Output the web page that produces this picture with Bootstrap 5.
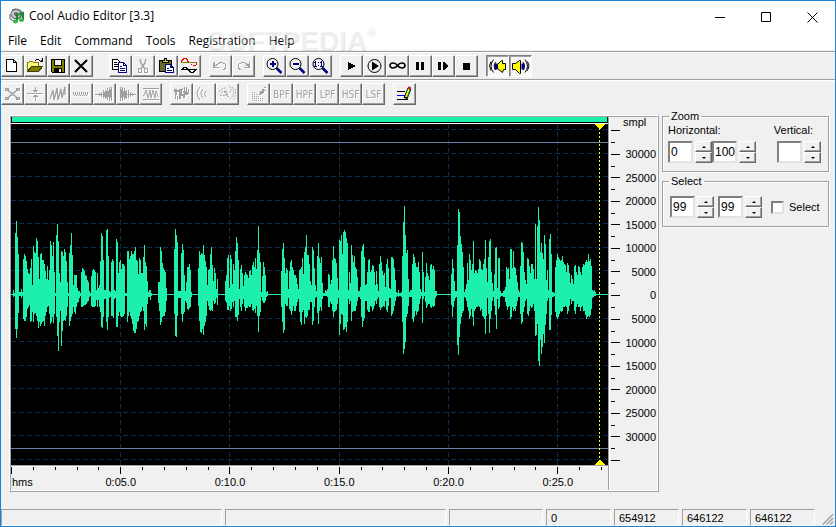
<!DOCTYPE html>
<html lang="en">
<head>
<meta charset="utf-8">
<meta name="viewport" content="width=device-width, initial-scale=1">
<title>Cool Audio Editor [3.3]</title>
<link href="https://cdn.jsdelivr.net/npm/bootstrap@5.3.0/dist/css/bootstrap.min.css" rel="stylesheet">
<style>
body{font-family:"Liberation Sans",Arial,sans-serif;font-size:11px;line-height:14px;color:#000;background:#f0f0f0}
.app{border:1px solid #1883d7;min-height:100vh}
.caption,.menus{font-family:"Open Sans","Noto Sans",sans-serif;font-size:12px;background:#fff}
.caption{height:30px;padding-left:8px}
.menus{height:19px}
.menus a{color:#000;text-decoration:none;line-height:19px}
.menus a:hover{background:#cce8ff}
.menulist{gap:13px;padding-left:7px}
.winbtn{width:46px;height:30px;border:0;border-radius:0}
.watermark{position:absolute;left:205px;top:23px;font:bold 28px/34px "Liberation Sans",Arial,sans-serif;color:rgba(255,255,255,.4);text-shadow:1px 1px 1px rgba(0,0,0,.1);pointer-events:none}
.watermark sup{font-size:12px;top:-14px}
.tools{height:28px;padding-top:3px;gap:8px;border-top:1px solid #a0a0a0;box-shadow:inset 0 1px 0 #fff}
.tools.first{margin-top:1px}
.wide{margin-right:8px}
.tool{width:23px;height:22px;padding:0;border-radius:0;border:1px solid;border-color:#fff #696969 #696969 #fff;box-shadow:inset -1px -1px 0 #a0a0a0;background:#f0f0f0;display:block;overflow:hidden;color:#000}
.tool.pressed{background:#f8f8f8;border-color:#808080 #fff #fff #808080;box-shadow:inset 1px 1px 0 #a0a0a0}
.tool:disabled{opacity:1;color:#a0a0a0;background:#f0f0f0;border-color:#fff #696969 #696969 #fff}
.tool:disabled svg,.tool:disabled span{filter:drop-shadow(1px 1px 0 #fff)}
.tool svg{display:block;width:21px;height:20px;shape-rendering:crispEdges;fill:none;stroke:currentColor}
.tool svg .soft{shape-rendering:auto}
.tool span{display:block;font:10px/19px "DejaVu Sans Condensed","DejaVu Sans",sans-serif;text-align:center;white-space:nowrap}
.workspace{padding:2px 6px 17px 8px;gap:3px}
.wavebox{margin-top:6px;border:1px solid;border-color:#fff #a0a0a0 #a0a0a0 #fff;min-width:0}
.waveinner{border:1px solid;border-color:#a0a0a0 #fff #fff #a0a0a0}
.overview{height:6px;margin-bottom:1px;background:#1df0ad;border:solid #000;border-width:0 1px 1px;box-shadow:0 1px 0 #fff}
.plot{background:#000;min-height:200px;position:relative}
.plot svg{position:absolute;inset:0;width:100%;height:100%;shape-rendering:crispEdges}
.ruler{height:25px;border-top:1px solid #a0a0a0;box-shadow:inset 0 1px 0 #fff}
.ruler svg{display:block;width:100%;height:24px}
.scale{width:49px;border-left:1px solid #a0a0a0;box-shadow:inset 1px 0 0 #fff;position:relative}
.scale svg{position:absolute;inset:0;width:100%;height:100%}
.ruler svg,.scale svg{overflow:visible;font-size:11px}
.ruler line,.scale line{stroke:#000;shape-rendering:crispEdges}
.side{width:167px}
.frame{border:1px solid #a0a0a0;box-shadow:1px 1px 0 #fff,inset 1px 1px 0 #fff;padding:0 7px 8px 5px;min-width:0}
.frame legend{float:none;width:auto;font-size:11px;line-height:14px;margin:0 0 0 1px;padding:0 2px}
.frame.second{margin-top:2px}
.second .fields{padding:8px 0 0 2px}
.field{width:25px;height:22px;flex:none;border:2px solid;border-color:#808080 #e3e3e3 #e3e3e3 #808080;border-radius:0;background:#fff;padding:0 0 0 1px;font-size:12px;line-height:17px;color:#000}
.spin{width:17px;flex:none;margin-left:2px}
.spin button{display:flex;width:17px;height:11px;padding:0;border:1px solid;border-color:#fff #696969 #696969 #fff;box-shadow:inset -1px -1px 0 #a0a0a0;background:#f0f0f0;align-items:center;justify-content:center}
.spin button::before{content:"";border:2px solid transparent;border-bottom:2px solid #000;border-top:0}
.spin button.down::before{border-top:2px solid #000;border-bottom:0}
.tick{appearance:none;flex:none;width:13px;height:13px;background:#fff;border:2px solid;border-color:#808080 #e3e3e3 #e3e3e3 #808080;margin:0 5px 0 9px}
.tick:checked{background:#000}
.status{height:17px;gap:3px;padding-right:1px}
.pane{border:1px solid;border-color:#a0a0a0 #fff #fff #a0a0a0;padding-left:4px;line-height:16px}
.pane.num{width:65px}
.pane.sel{width:94px}
.grip{width:16px}
</style>
<script src="https://cdn.jsdelivr.net/npm/bootstrap@5.3.0/dist/js/bootstrap.bundle.min.js"></script>
</head>
<body>
<div class="app d-flex flex-column position-relative">
<header class="caption d-flex align-items-center">
 <svg width="16" height="16" viewBox="0 0 16 16"><ellipse cx="7.500" cy="6" rx="6" ry="5.500" fill="#777"/><ellipse cx="7" cy="6" rx="4.500" ry="4" fill="#c8c8c8"/><circle cx="7" cy="6" r="2" fill="#666"/><path d="M1 6v5l4 2M3 2l4-1" stroke="#555" fill="none"/><path d="M8 14V7l6-2v7" fill="none" stroke="#178a2b" stroke-width="2"/><ellipse cx="6.500" cy="13.500" rx="2.500" ry="2" fill="#38b84a"/><ellipse cx="12.500" cy="12" rx="2.500" ry="2" fill="#38b84a"/></svg>
 <span class="flex-grow-1 ms-1">Cool Audio Editor [3.3]</span>
 <button class="btn winbtn p-0" aria-label="Minimize"><svg width="11" height="11" viewBox="0 0 11 11" stroke="#000"><path d="M0 5.500h10"/></svg></button>
 <button class="btn winbtn p-0" aria-label="Maximize"><svg width="11" height="11" viewBox="0 0 11 11" stroke="#000" fill="none"><path d="M.5.5h9v9h-9z"/></svg></button>
 <button class="btn winbtn p-0" aria-label="Close"><svg width="11" height="11" viewBox="0 0 11 11" stroke="#000"><path d="M.5.5l10 10M10.500.5l-10 10"/></svg></button>
</header>
<nav class="menus"><div class="menulist d-flex"><a href="#">File</a><a href="#">Edit</a><a href="#">Command</a><a href="#">Tools</a><a href="#">Registration</a><a href="#">Help</a></div></nav>
<div class="watermark">SOFTPEDIA<sup>®</sup></div>

<div class="tools first d-flex" role="toolbar" aria-label="Main">
 <div class="d-flex wide">
  <button class="tool" aria-label="New"><svg viewBox="1 1 21 20"><path fill="#fff" d="M5.500 4.500h7l3 3v9h-10zM12.500 4.500v3h3"/></svg></button>
  <button class="tool" aria-label="Open"><svg viewBox="1 1 21 20"><path fill="#ffff80" stroke="#808000" d="M3.500 16.500v-9h1l1-1h3l1 1h5v4"/><path fill="#808000" stroke="#404000" d="M3.500 16.500l4-5h11l-4 5z"/><path d="M11 5.500h1M12 4.500h3M15 5.500h1M16 6.500h3M17 5.500h2M18.500 3v4"/></svg></button>
  <button class="tool" aria-label="Save"><svg viewBox="1 1 21 20"><path fill="#808000" d="M4.500 4.500h13v13h-12l-1-1z"/><path fill="#f0f0f0" d="M7.500 4.500h7v6h-7z"/><path fill="#000" d="M7.500 13.500h7v4h-7z"/><path stroke="#fff" stroke-width="2" d="M13 14v3"/></svg></button>
  <button class="tool" aria-label="Delete"><svg viewBox="1 1 21 20"><path class="soft" stroke-width="2" d="M5 5l12 12M17 5L5 17"/></svg></button>
 </div>
 <div class="d-flex">
  <button class="tool" aria-label="Copy"><svg viewBox="1 1 21 20"><path fill="#fff" d="M3.500 4.500h5l3 3v7h-8z"/><path d="M5 7.500h3M5 9.500h4M5 11.500h4"/><path fill="#fff" stroke="#000080" d="M9.500 7.500h5l3 3v7h-8zM14.500 7.500v3h3M11 11.500h2M11 13.500h5M11 15.500h5"/></svg></button>
  <button class="tool" disabled aria-label="Cut"><svg viewBox="1 1 21 20"><path class="soft" stroke-width="1.500" d="M8 4l1 4 4 6M14 4l-1 4-4 6"/><path d="M6.500 13.500h3v4h-3zM12.500 13.500h3v4h-3z"/></svg></button>
  <button class="tool" aria-label="Paste"><svg viewBox="1 1 21 20"><path fill="#6b6b28" d="M4.500 5.500h12v11h-12z"/><path fill="#e8d840" d="M7.500 7.500v-2h2v-2h2v2h2v2z"/><path fill="#fff" stroke="#000080" d="M10.500 9.500h5l3 3v5h-8zM15.500 9.500v3h3M12 13.500h2M12 15.500h5"/></svg></button>
  <button class="tool" aria-label="Mix paste"><svg viewBox="1 1 21 20"><path stroke="#f00" d="M3.500 7v-2h1v-1h1v-1h3v1h1v2h1M13 9.500h1M15 10.500h3M18.500 8v2"/><path stroke="#808000" d="M3 7.500h16"/><path d="M4.500 14v-1h1v-1h3v1h1v1h1v1h1v1h1v1h3v-1h1v-1h1v-1h1M3 14.500h16"/></svg></button>
 </div>
 <div class="d-flex">
  <button class="tool" disabled aria-label="Undo"><svg viewBox="1 1 21 20"><path d="M5.500 7v6M4.500 8v5M5 12.500h5M5 10.500h3M7 9.500h2M8.500 8.500h2M10 7.500h4M14 8.500h2M16.500 9v5M15.500 13v2M14 14.500h1"/></svg></button>
  <button class="tool" disabled aria-label="Redo"><svg viewBox="1 1 21 20"><path d="M17.500 7v6M16.500 9v4M12 12.500h6M14 10.500h3M14 9.500h2M12.500 8.500h2M9 7.500h4M7 8.500h2M6.500 9v5M7.500 13v2M8 14.500h1"/></svg></button>
 </div>
 <div class="d-flex">
  <button class="tool" aria-label="Zoom in"><svg viewBox="1 1 21 20"><g class="soft"><circle cx="9.500" cy="9" r="5.500"/><path stroke="#000080" stroke-width="2.500" d="M13.500 13l5 5"/></g><path stroke="#000080" stroke-width="2" d="M7 9h6M10 6v6"/></svg></button>
  <button class="tool" aria-label="Zoom out"><svg viewBox="1 1 21 20"><g class="soft"><circle cx="9.500" cy="9" r="5.500"/><path stroke="#000080" stroke-width="2.500" d="M13.500 13l5 5"/></g><path stroke="#000080" stroke-width="2" d="M7 9h6"/></svg></button>
  <button class="tool" aria-label="Zoom 1 to 1"><svg viewBox="1 1 21 20"><g class="soft"><circle cx="9.500" cy="9" r="5.500"/><path stroke="#000080" stroke-width="2.500" d="M13.500 13l5 5"/></g><path stroke="#000080" d="M5 7.500h1M6.500 6v6M5 11.500h3M9 7.500h1M9 10.500h1M11 7.500h1M12.500 6v6M11 11.500h3"/></svg></button>
 </div>
 <div class="d-flex">
  <button class="tool" aria-label="Play"><svg viewBox="1 1 21 20"><path fill="#000" stroke="none" d="M8 7v8h1v-1h2v-1h2v-1h2v-2h-2V9h-2V8H9V7z"/></svg></button>
  <button class="tool" aria-label="Play all"><svg viewBox="1 1 21 20"><g class="soft"><circle cx="11.500" cy="11" r="6.500"/><path fill="#000" stroke="none" d="M9 6.500l7 4.500-7 4.500z"/></g></svg></button>
  <button class="tool" aria-label="Loop"><svg viewBox="1 1 21 20"><path class="soft" stroke-width="1.600" d="M11.500 10.500C9 7 4 7.500 4 10.500s5 3.500 7.500 0 7.500-3 7.500 0-5 3.500-7.500 0z"/></svg></button>
  <button class="tool" aria-label="Pause"><svg viewBox="1 1 21 20"><path stroke-width="3" d="M8.500 7v8M13.500 7v8"/></svg></button>
  <button class="tool" aria-label="Play from pause"><svg viewBox="1 1 21 20"><path stroke-width="3" d="M7.500 7v8"/><path fill="#000" stroke="none" d="M11 7h2v1h1v1h1v1h1v2h-1v1h-1v1h-1v1h-2z"/></svg></button>
  <button class="tool" aria-label="Stop"><svg viewBox="1 1 21 20"><path fill="#000" stroke="none" d="M8 8h7v7H8z"/></svg></button>
 </div>
 <div class="d-flex">
  <button class="tool pressed" aria-pressed="true" aria-label="Left channel"><svg viewBox="1 1 21 20"><g class="soft"><path fill="#ff0" d="M19.500 8.500v6h-2l-1 3-5-4v-4l4-4h1v3z"/><path d="M7.500 4.500q-5 7 0 13M5 6.500q-3 4 0 9M9.500 7q-3 4 0 8"/><path stroke="#000080" stroke-width="3" d="M10 8.500v6"/></g></svg></button>
  <button class="tool pressed" aria-pressed="true" aria-label="Right channel"><svg viewBox="1 1 21 20"><g class="soft"><path fill="#ff0" d="M3.500 8.500v6h3l4 4h1v-13h-1l-4 3z"/><path d="M16 4.500q5 7 0 13M18.500 6.500q3 4 0 9M14 7q3 4 0 8"/><path stroke="#000080" stroke-width="3" d="M14 8.500v6"/></g></svg></button>
 </div>
</div>

<div class="tools d-flex" role="toolbar" aria-label="Effects">
 <div class="d-flex">
  <button class="tool" disabled aria-label="Resize"><svg viewBox="1 1 21 20"><path class="soft" stroke-width="1.500" d="M6 6l4 4h3l4-4M6 16l4-4h3l4 4"/><path d="M4.500 5.500h3v2h-3zM15.500 5.500h3v2h-3zM4.500 14.500h3v2h-3zM15.500 14.500h3v2h-3z"/></svg></button>
  <button class="tool" disabled aria-label="Center"><svg viewBox="1 1 21 20"><path d="M3 10.500h16M11.500 4v5M11.500 12v6M9 7.500h5M10 8.500h3M9 13.500h5M10 12.500h3"/></svg></button>
  <button class="tool" disabled aria-label="Amplify"><svg viewBox="1 1 21 20"><path class="soft" stroke-width="1.300" d="M3 16l3-9 1 10 3-12 1 12 3-11 1 9 3-11v8"/></svg></button>
  <button class="tool" disabled aria-label="Attenuate"><svg viewBox="1 1 21 20"><path d="M3.500 9v3M5.500 9v3M7.500 9v3M9.500 9v3M11.500 9v3M13.500 9v3M15.500 9v3M17.500 9v3M4 12.500h1M6 12.500h1M8 12.500h1M10 12.500h1M12 12.500h1M14 12.500h1M16 12.500h1"/></svg></button>
  <button class="tool" disabled aria-label="Fade in"><svg viewBox="1 1 21 20"><path d="M2 11.500h17M6.500 10v3M8.500 9v5M10.500 7v8M12.500 7v9M14.500 5v12M16.500 4v14M18.500 4v14M11.500 9v5M13.500 8v7M15.500 8v6M17.500 6v9"/></svg></button>
  <button class="tool" disabled aria-label="Fade out"><svg viewBox="1 1 21 20"><path d="M4 11.500h16M4.500 4v14M6.500 4v14M8.500 5v12M10.500 7v9M12.500 7v8M14.500 9v5M16.500 10v3M5.500 6v9M7.500 8v6M9.500 8v7"/></svg></button>
  <button class="tool" disabled aria-label="Normalize"><svg viewBox="1 1 21 20"><path d="M4 5.500h16M4 16.500h16"/><path class="soft" d="M4 13l2-2 1-4 2 8 2-8 1 8 2-8 2 8 1-7 2 6"/></svg></button>
 </div>
 <div class="d-flex">
  <button class="tool" disabled aria-label="Flanger"><svg viewBox="1 1 21 20"><path fill="currentColor" stroke="none" d="M4 6h3v1h2V6h3v5h3v4h-2v-2h-2v3h-1v-3H9V9H7v3H5V9H4zM12 5h1v3h1V4h1v4h1V4h1v5h1V6h1v5h-1v1h-4z"/><path d="M5.500 12v4M7.500 13v4M9.500 12v4"/></svg></button>
  <button class="tool" disabled aria-label="Echo"><svg viewBox="1 1 21 20"><g class="soft"><path d="M7 4q-6 6 0 13M10 6q-4 4 0 9M13 8q-3 3 0 6"/></g></svg></button>
  <button class="tool" disabled aria-label="Reverb"><svg viewBox="1 1 21 20"><g class="soft" stroke-dasharray="2 1"><path d="M3 9q3-4 7-4M5 10q3-3 6-1M4 12l6 1M13 3q4 4 0 8M16 4q4 7-2 12M19 6q2 6-2 11"/><path stroke-width="2.500" d="M9 8l3 6"/></g></svg></button>
 </div>
 <div class="d-flex">
  <button class="tool" disabled aria-label="Noise reduction"><svg viewBox="1 1 21 20"><path stroke-dasharray="1 1" d="M5 9.500h4M5 11.500h6M5 13.500h8M5 15.500h11M5 17.500h11"/><path fill="currentColor" stroke="none" d="M17 4h2v1h-2v2h2v1h-2v2h-1v1h-2v1h-2v-2h1V8h2V6h2z"/></svg></button>
  <button class="tool" disabled><span>BPF</span></button>
  <button class="tool" disabled><span>HPF</span></button>
  <button class="tool" disabled><span>LPF</span></button>
  <button class="tool" disabled><span>HSF</span></button>
  <button class="tool" disabled><span>LSF</span></button>
 </div>
 <div class="d-flex">
  <button class="tool" aria-label="Options"><svg viewBox="1 1 21 20"><path d="M4 8.500h8M4 16.500h11"/><path stroke="#00f" d="M4 12.500h8"/><g class="soft"><path stroke-width="4" d="M12.500 15.500l4-10"/><path stroke="#ff0" stroke-width="2" d="M13 14l3-8"/><path stroke="#008080" d="M14.500 14l3-8"/><path stroke="#c00040" stroke-width="3" d="M16 6l1-2"/></g></svg></button>
 </div>
</div>

<main class="workspace d-flex flex-grow-1">
 <div class="wavebox flex-grow-1 d-flex">
  <div class="waveinner flex-grow-1 d-flex">
   <div class="flex-grow-1 d-flex flex-column">
    <div class="overview"></div>
    <div class="plot flex-grow-1">
     <svg id="grid"></svg>
     <svg viewBox="0 0 597 341" preserveAspectRatio="none"><path id="wave" fill="#1df0ad"/><path stroke="#ff0" stroke-dasharray="2 2" d="M588.500 0v341"/><path fill="#ff0" d="M583 0h11l-5 5h-1zM583 341h11l-5-5h-1z"/></svg>
    </div>
    <div class="ruler"><svg id="times"></svg></div>
   </div>
   <div class="scale"><svg id="levels"></svg></div>
  </div>
 </div>
 <aside class="side">
  <fieldset class="frame">
   <legend>Zoom</legend>
   <div class="d-flex justify-content-between"><label for="zh">Horizontal:</label><label for="zv" class="me-2">Vertical:</label></div>
   <div class="d-flex pt-1">
    <input class="field" id="zh" value="0"><div class="spin"><button aria-label="Up"></button><button class="down" aria-label="Down"></button></div>
    <input class="field" aria-label="Horizontal end" value="100"><div class="spin"><button aria-label="Up"></button><button class="down" aria-label="Down"></button></div>
    <input class="field ms-auto" id="zv"><div class="spin"><button aria-label="Up"></button><button class="down" aria-label="Down"></button></div>
   </div>
  </fieldset>
  <fieldset class="frame second">
   <legend>Select</legend>
   <div class="fields d-flex align-items-center">
    <input class="field" aria-label="Selection start" value="99"><div class="spin"><button aria-label="Up"></button><button class="down" aria-label="Down"></button></div>
    <input class="field ms-1" aria-label="Selection end" value="99"><div class="spin"><button aria-label="Up"></button><button class="down" aria-label="Down"></button></div>
    <input type="checkbox" class="tick" id="sel"><label for="sel">Select</label>
   </div>
  </fieldset>
 </aside>
</main>

<footer class="status d-flex">
 <div class="pane flex-fill"></div><div class="pane flex-fill"></div><div class="pane sel"></div>
 <div class="pane num">0</div><div class="pane num">654912</div><div class="pane num">646122</div><div class="pane num">646122</div>
 <svg class="grip" viewBox="0 0 17 17" stroke="#a0a0a0" stroke-width="1.500"><path d="M5 16L16 5M9 16l7-7M13 16l3-3"/></svg>
</footer>
</div>
<script>
// Peaks per pixel column: start x, then up,down pairs measured from the zero line
const peaks = {
 2:'4,2 1,1 61,34 73,43 57,34 40,18 2,1 2,1 5,3 2,1 35,24 40,26 38,26 33,22 25,14 21,12 20,10 26,27 35,26 9,17 48,27 42,19 41,18 56,21 53,26 37,33 15,27 40,31 41,29 34,27 34,26 30,31 23,21 15,17 28,12 14,11 24,19 53,29 49,27 38,22 52,28 22,19 1,1 59,22 70,41 53,56 21,27 12,16 43,51 42,36 38,26 45,25 42,26 33,21 12,12 1,1 41,31 49,26 61,22 39,19 9,12 19,17 19,19 19,12 6,8 3,7 3,3 1,1 22,12 26,12 25,11 23,10 19,10 18,9 14,7 12,6 3,2 1,1 18,11 23,12 25,12 24,12 22,11 4,5 21,12 6,5 9,12 33,17 61,32 58,33 34,22 4,4 4,4 64,27 65,35 38,22 3,3 2,2 32,21 35,21 33,23 4,4 3,3 55,32 52,32 21,21 32,17 34,21 25,22 30,22 30,21 28,19 1,1 1,1 43,27 43,21 35,17 38,21 43,24 40,29 40,36 43,38 47,38 34,34 33,27 20,26 36,21 34,17 21,16 21,12 37,16 49,35 32,29 28,32 13,9 2,2 4,2 4,5 1,1',
 147:'12,8 12,16 47,30 43,27 31,22 26,21 24,21 22,17 6,6',
 163:'45,19 65,41 59,42 52,21 3,3 3,3 3,3 41,19 50,27 44,19 19,17 3,6 12,8 27,14 27,15 30,13 24,12 2,2',
 187:'26,11 43,26 39,37 41,38 40,34 49,40 39,31 33,27 27,21 9,6 24,11 25,15 40,16 47,15 29,16 13,6 26,9 21,8 5,3 15,10',
 214:'13,6 19,8 36,15 39,15 6,11 39,16 35,14 10,7 30,12 24,6 43,22 57,22 51,26 34,20 5,4 25,12 29,16 21,9 8,4 19,12 22,16 20,13 19,13 16,11 23,12 24,12 19,9 29,15 32,16 27,14 36,18 25,11 44,21 68,37 41,21 32,17 2,2 18,6 32,8 27,8 19,6 2,2 3,1',
 270:'23,12 45,27 51,38 36,35 21,9 26,11 24,11 5,3 23,14 32,16 34,20 27,16 24,11 19,16 19,16 16,11 10,7 5,4 24,17 25,27 27,30 36,17 20,15 42,29 47,22 59,23 39,21 39,15 30,15 13,7 9,7 47,30 44,26 26,12 9,3 3,2 38,18 51,29 36,16 31,12 37,16 11,4 1,1 1,1 4,1 3,1 5,2 20,12 19,12 10,7 14,9 34,16 48,22 36,17 35,16 31,15 16,9 4,3 54,40 53,29 59,19 40,20 62,35 64,34 62,32 56,37 51,27 4,4 22,9 11,6 49,26 39,17 32,16 38,16 27,16 25,11 17,6 3,2 3,2 7,4 43,22 48,32 50,26 37,23 9,6 10,6 22,15 34,17 35,17 22,11 24,12 29,16 28,14 22,11 9,6 23,9 10,4 3,2 30,12 38,15 32,13 23,12 19,11 21,12 7,6 30,15 35,17 26,11 6,3 5,3 37,21 37,19 35,16 26,11 14,6 2,2 1,1 4,2 1,1 1,1 2,2 38,27 72,59 88,54 59,47 41,22 44,19 15,11 2,2 4,2 4,2 30,24 40,27 37,22 31,16 27,20 27,17 32,16 22,9 5,4 2,1 42,28 22,4 2,1 17,7 31,13 21,11 18,9 14,9 29,12 30,13 25,11 28,12 24,11 3,3 3,1',
 440:'20,10 35,22 26,12 13,6 3,3 3,2 49,50 85,60 82,42 58,29 50,22 42,18 27,16 2,2 5,3 10,6 31,12 14,16 40,24 34,21 24,14 30,22 53,31 21,16 24,14 23,12 21,12 25,11 35,12 33,16 25,14 24,21 30,22 35,24 54,39 26,21 12,3 37,19 53,38 55,24 22,16 11,6 3,2 20,11 46,20 47,34 6,4 36,14 36,12 3,2 1,1 1,1 3,2 4,2 7,7 27,11 25,15 26,12 15,11 45,24 45,22 26,12 43,16 27,14 26,16 19,11 12,6 4,2 2,2 28,19 52,29 51,27 42,17 22,12 14,6 10,4 36,19 35,21 28,16 21,11 30,13 30,12 25,9 15,16 70,41 15,40 68,29 87,66 74,71 42,45 51,59 41,52 35,39 59,48 50,30 14,19 24,6 4,3 55,35 60,35 40,20 2,2 2,2 1,1 27,17 34,22 40,24 37,22 35,19 33,16 34,17 38,16 32,12 30,12 29,11 22,12 31,19 29,16 21,11 11,4 19,9 15,6 10,6 28,16 29,19 22,12 19,9 28,12 27,12 22,16 19,12 27,11 30,16 29,16 32,20 34,24 32,22 40,21 33,22 35,20 28,14 4,3 3,2 4,1 2,1'
};
let d = 'M0 170h597v1H0z';
for (const [start, list] of Object.entries(peaks))
  list.split(' ').forEach((p, i) => {
    const [up, down] = p.split(',').map(Number);
    d += `M${+start + i} ${170 - up}h1v${up + down + 1}h-1z`;
  });
document.getElementById('wave').setAttribute('d', d);

const line = (x1, y1, x2, y2, more = '') => `<line x1="${x1}" y1="${y1}" x2="${x2}" y2="${y2}" ${more}/>`;
const pct = (v, size) => (v / size * 100).toFixed(3) + '%';
const blue = 'stroke="#0a2c50" stroke-dasharray="5 3"';
let grid = '', levels = '<text x="14" y="9">smpl</text>', times = '<text x="1" y="20">hms</text>';
for (let i = -7; i <= 7; i++) {
  const y = 170.5 + i * 23.57;
  grid += line(0, pct(y, 341), '100%', pct(y, 341), blue);
  const s = pct(y + 8, 373), half = pct(y + 20, 373);
  levels += line(2, s, 11, s);
  if (i < 7) levels += line(2, half, 6, half);
  if (Math.abs(i) < 7) levels += `<text x="47" y="${s}" dy="4" text-anchor="end">${Math.abs(i) * 5000}</text>`;
}
for (let i = 0; i <= 27; i++) {
  const x = pct(i * 21.85 + .5, 597), major = i % 5 === 0;
  times += line(x, 1, x, major ? 8 : 4);
  if (major && i) {
    grid += line(x, 0, x, '100%', blue);
    times += `<text x="${x}" y="20" text-anchor="middle">0:${String(i).padStart(2, '0')}.0</text>`;
  }
}
for (const y of [18.5, 324.5]) grid += line(0, pct(y, 341), '100%', pct(y, 341), 'stroke="#6a82a8"');
document.getElementById('grid').innerHTML = grid;
document.getElementById('levels').innerHTML = levels;
document.getElementById('times').innerHTML = times;
</script>
</body>
</html>
